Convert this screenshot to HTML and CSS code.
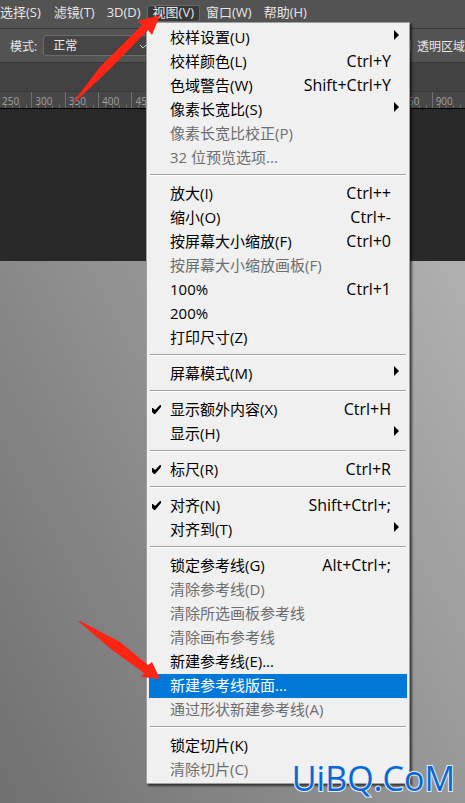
FILE: index.html
```
<!DOCTYPE html>
<html lang="zh-CN">
<head>
  <meta charset="UTF-8">
  <meta name="viewport" content="width=device-width, initial-scale=1">
  <title>视图菜单</title>
  <link rel="stylesheet" href="styles.css">
</head>
<body>
  <div class="app">
    <nav class="menubar">
      <button class="menubar-item">选择(S)</button>
      <button class="menubar-item">滤镜(T)</button>
      <button class="menubar-item">3D(D)</button>
      <button class="menubar-item open">视图(V)</button>
      <button class="menubar-item">窗口(W)</button>
      <button class="menubar-item">帮助(H)</button>
    </nav>

    <div class="options">
      <label for="mode">模式:</label>
      <select id="mode" class="mode">
        <option>正常</option>
      </select>
      <label class="transparent"><input type="checkbox" class="check-box">透明区域</label>
    </div>

    <div class="tabs"></div>

    <div class="ruler">
      <span>250</span><span>300</span><span>350</span><span>400</span><span>450</span><span></span><span></span>
      <span></span><span></span><span></span><span></span><span></span><span>850</span><span>900</span>
    </div>

    <div class="pasteboard"></div>
    <main class="canvas"></main>

    <div class="menu">
      <button class="item sub">校样设置(U)</button>
      <button class="item">校样颜色(L)<kbd>Ctrl+Y</kbd></button>
      <button class="item">色域警告(W)<kbd>Shift+Ctrl+Y</kbd></button>
      <button class="item sub">像素长宽比(S)</button>
      <button class="item" disabled>像素长宽比校正(P)</button>
      <button class="item" disabled>32 位预览选项...</button>
      <hr>
      <button class="item">放大(I)<kbd>Ctrl++</kbd></button>
      <button class="item">缩小(O)<kbd>Ctrl+-</kbd></button>
      <button class="item">按屏幕大小缩放(F)<kbd>Ctrl+0</kbd></button>
      <button class="item" disabled>按屏幕大小缩放画板(F)</button>
      <button class="item">100%<kbd>Ctrl+1</kbd></button>
      <button class="item">200%</button>
      <button class="item">打印尺寸(Z)</button>
      <hr>
      <button class="item sub">屏幕模式(M)</button>
      <hr>
      <button class="item"><svg class="tick" viewBox="0 0 10 9"><path d="M1 3h1l2 2 4-4 1-1h1v2L5 8 4 9H3L1 7z"/></svg>显示额外内容(X)<kbd>Ctrl+H</kbd></button>
      <button class="item sub">显示(H)</button>
      <hr>
      <button class="item"><svg class="tick" viewBox="0 0 10 9"><path d="M1 3h1l2 2 4-4 1-1h1v2L5 8 4 9H3L1 7z"/></svg>标尺(R)<kbd>Ctrl+R</kbd></button>
      <hr>
      <button class="item"><svg class="tick" viewBox="0 0 10 9"><path d="M1 3h1l2 2 4-4 1-1h1v2L5 8 4 9H3L1 7z"/></svg>对齐(N)<kbd>Shift+Ctrl+;</kbd></button>
      <button class="item sub">对齐到(T)</button>
      <hr>
      <button class="item">锁定参考线(G)<kbd>Alt+Ctrl+;</kbd></button>
      <button class="item" disabled>清除参考线(D)</button>
      <button class="item" disabled>清除所选画板参考线</button>
      <button class="item" disabled>清除画布参考线</button>
      <button class="item">新建参考线(E)...</button>
      <button class="item active">新建参考线版面...</button>
      <button class="item" disabled>通过形状新建参考线(A)</button>
      <hr>
      <button class="item">锁定切片(K)</button>
      <button class="item" disabled>清除切片(C)</button>
    </div>

    <svg class="arrow arrow-top" viewBox="0 0 86 88"><path d="M0 86 26 52 68 10 64 6 86 0 78 20 74 15 36 54 1 87z"/></svg>
    <svg class="arrow arrow-bottom" viewBox="0 0 82 60"><path d="M0 1 2 1 42 22 70 45 74 42 82 59 63 57 66 53 34 30z"/></svg>
    <div class="watermark">UiBQ.CoM</div>
  </div>
</body>
</html>
```
FILE: styles.css
```
* {
  box-sizing: border-box;
}
body {
  margin: 0;
  font-family: "Open Sans", "Noto Sans CJK SC", sans-serif;
  background: #282828;
}
button {
  border: none;
  background: none;
  font-family: inherit;
  white-space: nowrap;
}
.app {
  position: relative;
  min-height: 100vh;
  display: flex;
  flex-direction: column;
  overflow: hidden;
}

/* top bars */
.menubar {
  display: flex;
  height: 28px;
  padding-top: 5px;
  background: #535353;
}
.menubar-item {
  display: flex;
  height: 17px;
  padding: 0 6px;
  border-radius: 3px;
  font-size: 13px;
  line-height: 14px;
  color: #e6e6e6;
}
.menubar-item:first-child {
  padding-left: 0;
  padding-right: 7px;
}
.menubar-item.open {
  background: #383838;
  box-shadow: inset 0 0 0 1px #6a6a6a;
}
.options {
  display: flex;
  align-items: center;
  height: 35px;
  padding-left: 10px;
  border-top: 1px solid #383838;
  border-bottom: 1px solid #383838;
  background: #535353;
  font-size: 12px;
  color: #e6e6e6;
}
.mode {
  appearance: none;
  width: 112px;
  height: 21px;
  margin-left: 6px;
  padding: 0 9px;
  border: 1px solid #6a6a6a;
  border-radius: 3px;
  background: #454545 url("data:image/svg+xml,%3Csvg xmlns='http://www.w3.org/2000/svg' width='8' height='5'%3E%3Cpath d='M1 1l3 3 3-3' fill='none' stroke='%23ccc'/%3E%3C/svg%3E") no-repeat 95px 8px;
  font: inherit;
  color: #f0f0f0;
}
.transparent {
  display: flex;
  align-items: center;
  gap: 6px;
  margin-left: auto;
  white-space: nowrap;
}
.check-box {
  appearance: none;
  width: 13px;
  height: 13px;
  margin: 0;
  border: 1px solid #888;
  border-radius: 2px;
}
.tabs {
  height: 28px;
  background: #424242;
}
.ruler {
  display: grid;
  grid-template-columns: repeat(14, 1fr);
  height: 18px;
  margin-left: -2px;
  border-top: 1px solid #383838;
  border-bottom: 1px solid #000;
  background: #474747;
  font-size: 10px;
  line-height: 18px;
  color: #a0a0a0;
}
.ruler span {
  height: 16px;
  padding-left: 3px;
  border-left: 1px solid #707070;
  background: repeating-linear-gradient(90deg, transparent 0 6px, #707070 6px 7px) no-repeat 0 100% / 28px 3px;
}
.pasteboard {
  height: 152px;
  background: #282828;
}
.canvas {
  flex: 1;
  background: linear-gradient(62deg, #707070, #b0b0b0);
}

/* drop-down menu */
.menu {
  position: absolute;
  top: 22px;
  left: 146px;
  width: 264px;
  padding: 3px 2px 1px;
  border: 1px solid #a0a0a0;
  background: #f0f0f0;
  box-shadow: 2px 2px 2px rgba(0, 0, 0, 0.6);
}
.item {
  position: relative;
  display: flex;
  width: 100%;
  height: 24px;
  padding: 0 16px 0 21px;
  font-size: 15px;
  line-height: 22px;
  color: #000;
}
.item:disabled {
  color: #6d6d6d;
}
.item.active {
  background: #0078d7;
  color: #fff;
}
.item kbd {
  margin-left: auto;
  font-family: inherit;
  font-size: 16px;
}
.item.sub::after {
  content: "";
  position: absolute;
  top: 4px;
  right: 8px;
  border: 5px solid transparent;
  border-left-color: #000;
  border-right: none;
}
.tick {
  position: absolute;
  left: 2px;
  top: 7px;
  width: 10px;
  height: 9px;
}
.menu hr {
  height: 2px;
  margin: 4px 1px 6px;
  border: none;
  border-top: 1px solid #a0a0a0;
  background: #fff;
}

/* annotations */
.arrow {
  position: absolute;
  fill: #ff2414;
}
.arrow-top {
  top: 15px;
  left: 74px;
  width: 86px;
  height: 88px;
}
.arrow-bottom {
  top: 620px;
  left: 78px;
  width: 82px;
  height: 60px;
}
.watermark {
  position: absolute;
  right: 10px;
  bottom: 4px;
  font-size: 34px;
  line-height: 42px;
  font-weight: 500;
  color: #0a66d0;
  -webkit-text-stroke: 2px #e4eefa;
  paint-order: stroke fill;
}
```
